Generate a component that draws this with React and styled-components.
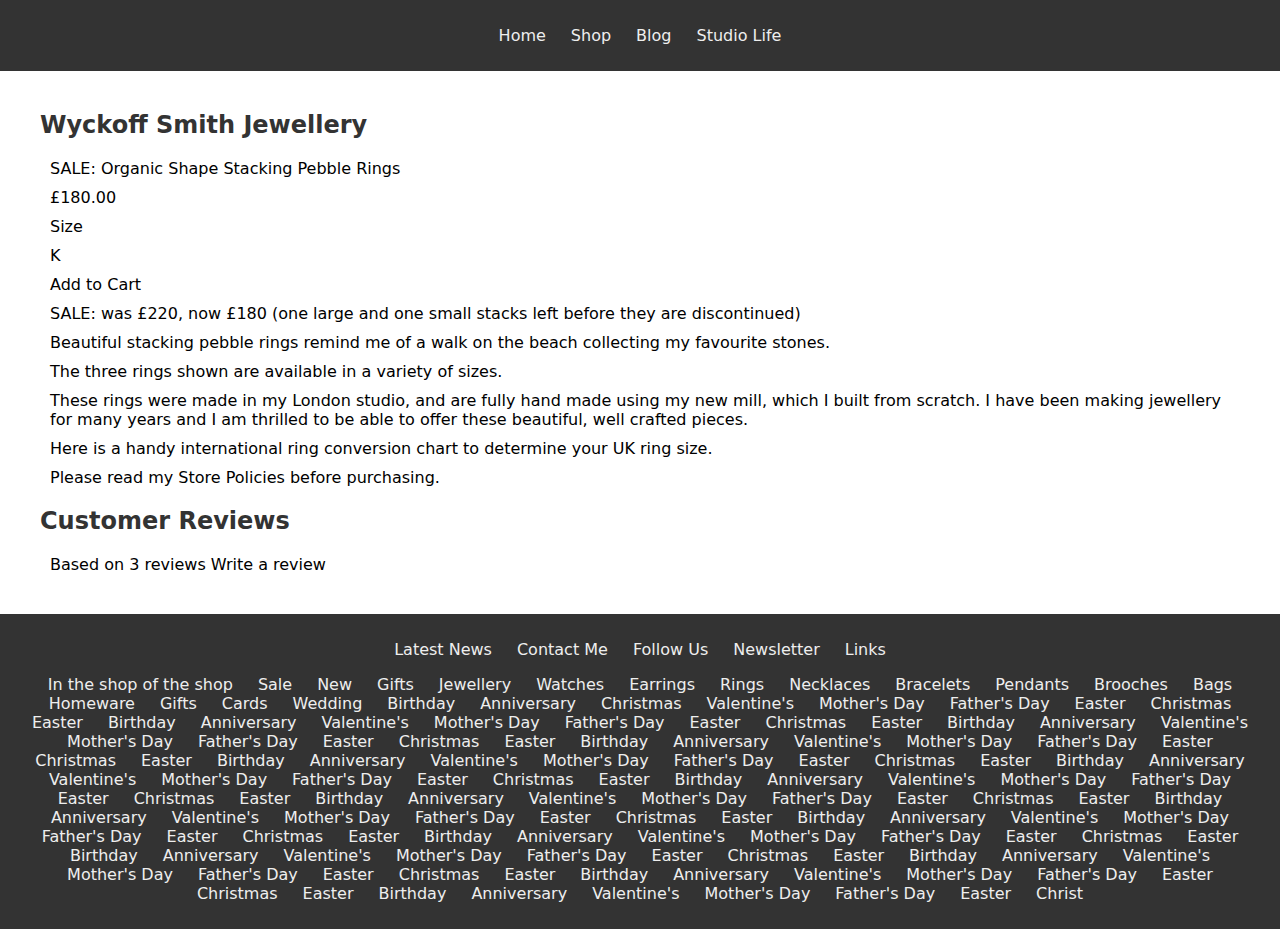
import React from 'react';
import styled, { createGlobalStyle } from 'styled-components';

const GlobalStyle = createGlobalStyle`
  html, body {
    margin: 0;
    padding: 0;
    background: #fff;
    font-family: "DejaVu Sans", Verdana, sans-serif;
    font-size: 16px;
  }
`;

const Header = styled.header`
  height: 71px;
  background: #333;
  display: flex;
  align-items: center;
  justify-content: center;
`;

const NavList = styled.nav`
  display: flex;
  gap: 25px;
  line-height: 19px;
  margin-top: -1px;

  a {
    color: #eee;
    text-decoration: none;
  }
`;

const Main = styled.main`
  padding: 40px 40px 35px;
`;

const Heading = styled.h2`
  margin: ${props => (props.first ? '0 0 15px' : '15px 0')};
  font-size: 24px;
  line-height: 28px;
  font-weight: bold;
  color: #333;
`;

const Line = styled.p`
  margin: 0;
  padding: 5px 10px;
  line-height: 19px;
  color: #000;
`;

const Footer = styled.footer`
  background: #333;
  padding: 26px 0 45px;
  color: #eee;
`;

const FooterLinks = styled.div`
  display: flex;
  justify-content: center;
  gap: 25px;
  line-height: 19px;
  margin-bottom: 16px;
`;

const Tags = styled.div`
  display: flex;
  flex-wrap: wrap;
  justify-content: center;
  column-gap: 25px;
  padding: 0 25px;
  line-height: 19px;
`;

const Tag = styled.span`
  white-space: nowrap;
`;

const cycle = ["Christmas", "Easter", "Birthday", "Anniversary", "Valentine's", "Mother's Day", "Father's Day", "Easter"];

const tags = [
  'In the shop of the shop', 'Sale', 'New', 'Gifts', 'Jewellery', 'Watches', 'Earrings', 'Rings',
  'Necklaces', 'Bracelets', 'Pendants', 'Brooches', 'Bags', 'Homeware', 'Gifts', 'Cards', 'Wedding',
  'Birthday', 'Anniversary', 'Christmas', "Valentine's", "Mother's Day", "Father's Day", 'Easter',
];
for (let i = 0; i < 13; i++) tags.push(...cycle);
tags.push('Christmas', 'Easter', 'Birthday', 'Anniversary', "Valentine's", "Mother's Day", "Father's Day", 'Easter', 'Christ');

const paragraphs = [
  'SALE: Organic Shape Stacking Pebble Rings',
  '£180.00',
  'Size',
  'K',
  'Add to Cart',
  'SALE: was £220, now £180 (one large and one small stacks left before they are discontinued)',
  'Beautiful stacking pebble rings remind me of a walk on the beach collecting my favourite stones.',
  'The three rings shown are available in a variety of sizes.',
  'These rings were made in my London studio, and are fully hand made using my new mill, which I built from scratch. I have been making jewellery for many years and I am thrilled to be able to offer these beautiful, well crafted pieces.',
  'Here is a handy international ring conversion chart to determine your UK ring size.',
  'Please read my Store Policies before purchasing.',
];

const App = () => (
  <>
    <GlobalStyle />
    <Header>
      <NavList>
        {['Home', 'Shop', 'Blog', 'Studio Life'].map(item => (
          <a key={item} href="#">{item}</a>
        ))}
      </NavList>
    </Header>
    <Main>
      <Heading as="h1" first>Wyckoff Smith Jewellery</Heading>
      {paragraphs.map((text, i) => (
        <Line key={i}>{text}</Line>
      ))}
      <Heading>Customer Reviews</Heading>
      <Line>Based on 3 reviews Write a review</Line>
    </Main>
    <Footer>
      <FooterLinks>
        {['Latest News', 'Contact Me', 'Follow Us', 'Newsletter', 'Links'].map(item => (
          <span key={item}>{item}</span>
        ))}
      </FooterLinks>
      <Tags>
        {tags.map((tag, i) => (
          <Tag key={i}>{tag}</Tag>
        ))}
      </Tags>
    </Footer>
  </>
);

export default App;
